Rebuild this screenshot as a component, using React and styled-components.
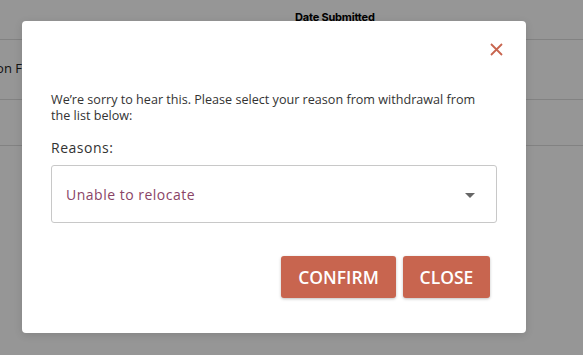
import React from "react";
import styled, { createGlobalStyle } from "styled-components";

const Global = createGlobalStyle`
  html, body { margin: 0; padding: 0; background: #fff; }
  body { font-family: "Open Sans", "Liberation Sans", sans-serif; overflow: hidden; }
  * { box-sizing: border-box; }
`;

const Page = styled.div`
  width: 583px;
  height: 355px;
  position: relative;
  overflow: hidden;
  background: #fff;
`;

const Table = styled.div`
  display: flex;
  flex-direction: column;
`;

const HeaderRow = styled.div`
  height: 40px;
  border-bottom: 1px solid #ddd;
  display: flex;
  align-items: flex-end;
  padding: 0 0 15px 295px;
`;

const HeaderCell = styled.div`
  font-family: Inter, "Liberation Sans", sans-serif;
  font-weight: 700;
  font-size: 11px;
  letter-spacing: -0.2px;
  color: #000;
`;

const Row = styled.div`
  height: ${(p) => p.$h}px;
  border-bottom: 1px solid #ddd;
  display: flex;
  align-items: center;
  overflow: hidden;
`;

const Cell = styled.div`
  margin-left: -56px;
  font-size: 13px;
  color: #222;
  white-space: nowrap;
  padding-bottom: 3px;
`;

const Overlay = styled.div`
  position: absolute;
  inset: 0;
  background: rgba(0, 0, 0, 0.41);
`;

const Dialog = styled.div`
  position: absolute;
  left: 22px;
  top: 21px;
  width: 504px;
  height: 312px;
  background: #fff;
  border-radius: 4px;
  box-shadow: 0 2px 8px rgba(0, 0, 0, 0.12);
  display: flex;
  flex-direction: column;
  padding: 22px 23px 35px 29px;
`;

const TopBar = styled.div`
  display: flex;
  justify-content: flex-end;
  height: 13px;
`;

const CloseIcon = styled.button`
  width: 13px;
  height: 13px;
  padding: 0;
  border: none;
  background: none;
  display: flex;
  cursor: pointer;
`;

const Body = styled.div`
  display: flex;
  flex-direction: column;
  padding-right: 6px;
  margin-top: 36px;
`;

const Message = styled.p`
  margin: 0;
  padding-right: 10px;
  font-size: 12.6px;
  line-height: 16px;
  color: #333;
`;

const Label = styled.div`
  margin-top: 14px;
  font-size: 14px;
  line-height: 20px;
  color: #333;
  letter-spacing: 0.5px;
`;

const SelectBox = styled.div`
  margin-top: 7px;
  height: 58px;
  border: 1px solid #c8c8c8;
  border-radius: 3px;
  display: flex;
  align-items: center;
  justify-content: space-between;
  padding: 0 21px 0 14px;
`;

const SelectValue = styled.span`
  font-size: 14px;
  letter-spacing: 0.5px;
  color: #8a4466;
`;

const Caret = styled.span`
  width: 0;
  height: 0;
  border-left: 5px solid transparent;
  border-right: 5px solid transparent;
  border-top: 5px solid #666;
  margin-top: 2px;
`;

const Actions = styled.div`
  margin-top: 33px;
  display: flex;
  justify-content: flex-end;
  gap: 7px;
  padding-right: 7px;
`;

const Button = styled.button`
  height: 42px;
  width: ${(p) => p.$w}px;
  border: none;
  border-radius: 3px;
  background: #c8654f;
  color: #fff;
  font-family: "Open Sans", "Liberation Sans", sans-serif;
  font-weight: 600;
  font-size: 17.5px;
  text-transform: uppercase;
  box-shadow: 0 1px 3px rgba(0, 0, 0, 0.25);
  cursor: pointer;
  padding: 0;
`;

export default function App() {
  return (
    <Page>
      <Global />
      <Table>
        <HeaderRow>
          <HeaderCell>Date Submitted</HeaderCell>
        </HeaderRow>
        <Row $h={60}>
          <Cell>Application Form</Cell>
        </Row>
        <Row $h={46} />
      </Table>
      <Overlay />
      <Dialog role="dialog">
        <TopBar>
          <CloseIcon aria-label="Close">
            <svg width="13" height="13" viewBox="0 0 13 13">
              <path
                d="M1 1 L12 12 M12 1 L1 12"
                stroke="#c8654f"
                strokeWidth="1.8"
                fill="none"
              />
            </svg>
          </CloseIcon>
        </TopBar>
        <Body>
          <Message>
            We’re sorry to hear this. Please select your reason from withdrawal from the
            list below:
          </Message>
          <Label>Reasons:</Label>
          <SelectBox>
            <SelectValue>Unable to relocate</SelectValue>
            <Caret />
          </SelectBox>
          <Actions>
            <Button $w={115}>Confirm</Button>
            <Button $w={87}>Close</Button>
          </Actions>
        </Body>
      </Dialog>
    </Page>
  );
}
